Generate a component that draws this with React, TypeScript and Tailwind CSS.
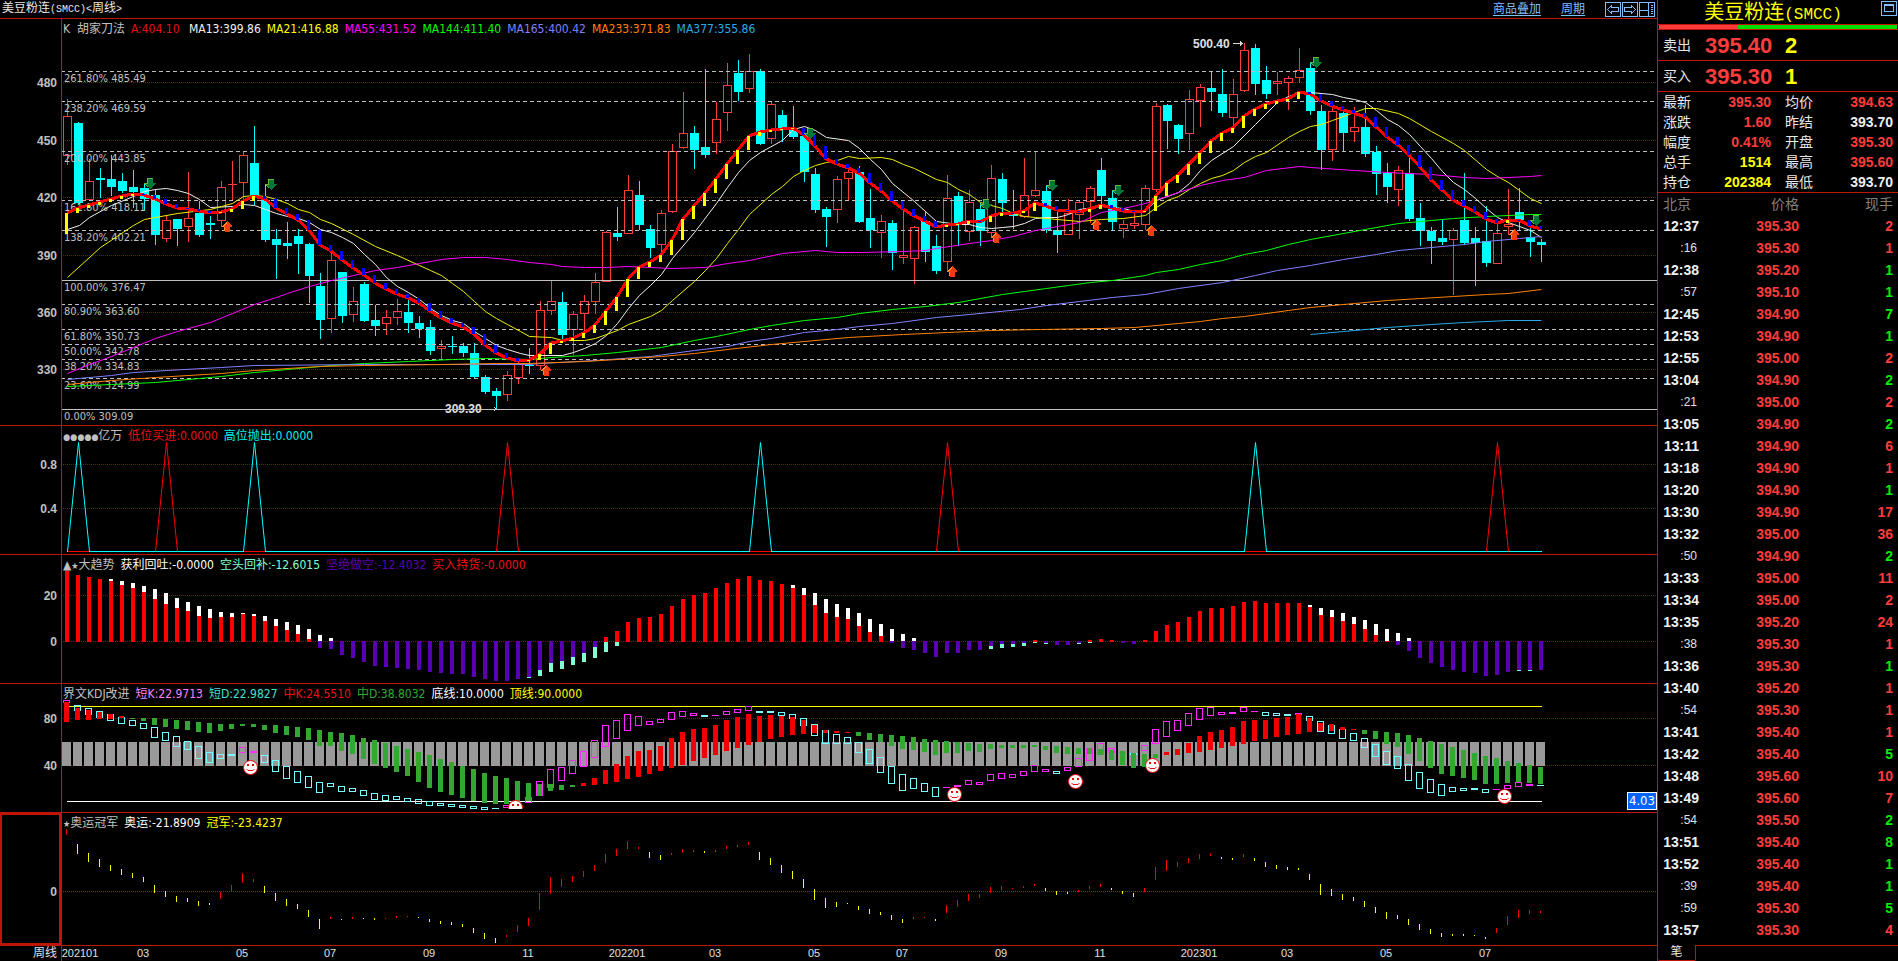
import type { ReactNode } from "react";

const LATIN = "font-['DejaVu_Sans_Condensed','Noto_Sans_CJK_SC',sans-serif]";
const STEP = 11;
const FIRST = 67;
const cx = (i: number) => FIRST + STEP * i;

type Row = [string, string];

/* high, body top, body bottom, low for each week; r = up, c = down */
const CANDLES = `r99,116,156,165 c122,123,203,204 r159,181,200,201 c168,178,180,197 c155,179,187,195 c173,181,191,192 c170,187,192,207
c184,188,199,209 c189,195,235,244 r215,220,239,242 c219,219,229,245 r172,218,227,242 c201,213,235,236 c216,223,225,238
r181,187,221,227 r161,184,185,200 r152,155,183,209 c126,163,195,204 c185,200,240,241 c229,239,245,278 c222,243,246,258
c229,236,244,273 c243,244,276,302 c273,286,320,338 r253,260,319,333 c272,272,316,322 r287,301,315,322 c282,284,321,321
c305,320,326,335 r310,317,324,335 r299,311,318,325 c299,312,323,332 c316,323,329,337 c320,327,351,354 r340,346,349,360
c336,346,347,353 c343,346,353,356 c343,353,377,377 c375,377,392,393 c388,391,396,409 r371,375,395,401 r360,364,378,384
c348,365,366,373 r301,310,366,370 r281,301,311,315 c292,302,335,339 r311,314,330,355 r295,301,314,333 r273,282,302,314
r231,232,282,282 c207,233,237,240 r175,190,234,234 c181,195,225,229 c225,229,248,257 r210,213,245,255 r144,151,212,213
r92,133,148,149 c126,133,150,168 c69,147,155,157 r102,119,143,154 r63,85,113,131 c60,73,92,100 r54,71,89,93
c69,71,144,144 r102,104,139,144 c110,115,128,141 c106,130,137,138 c134,136,172,181 c168,174,210,212 c207,209,217,246
r176,179,210,223 r169,172,179,201 c166,172,222,222 c189,218,230,247 r215,221,233,258 c220,223,253,269 r210,255,258,264
r226,227,259,284 c211,221,252,261 c235,246,271,273 r175,198,262,272 c192,196,225,245 r190,202,232,241 c203,209,231,245
r165,178,233,237 c173,179,203,212 c190,213,216,228 r158,195,217,218 r151,190,196,197 c186,191,230,232 c210,230,235,252
r199,213,235,235 r201,202,215,239 r186,188,202,223 c158,170,196,205 c191,198,222,230 r220,224,229,238 r212,223,226,229
r185,188,225,230 r103,106,190,192 c104,105,121,148 c124,125,139,153 r90,99,134,150 r84,87,101,127 c72,88,92,110
c69,94,113,116 r79,94,118,127 r43,50,91,92 c44,48,84,94 c66,80,94,98 r72,81,84,95 r76,78,83,110
r48,70,78,83 c63,68,111,114 c105,111,150,169 r107,111,150,161 c112,113,133,150 r107,127,132,142 c105,127,154,156
c146,152,174,194 c163,173,187,202 r166,170,190,206 c157,173,219,220 c203,218,231,245 c227,231,241,263 c219,238,242,244
r228,230,240,295 c173,220,243,244 c227,238,243,285 c206,241,263,266 r224,233,264,264 r189,224,227,235 c188,212,220,229
c223,237,242,256 c239,242,245,261`;

const TREND = [
  213, 208, 205, 202, 199, 196, 194, 195, 199, 204, 208, 209, 211, 213, 212, 209, 201, 196, 199, 208, 214, 220, 230, 245, 251,
  260, 268, 275, 283, 289, 294, 298, 303, 311, 318, 323, 327, 334, 345, 353, 358, 361, 360, 354, 343, 341, 338, 333, 325, 311,
  297, 279, 267, 262, 255, 240, 219, 206, 193, 179, 164, 150, 136, 132, 130, 129, 128, 135, 146, 159, 164, 168, 173, 183, 191,
  201, 209, 216, 221, 227, 225, 224, 221, 222, 216, 213, 213, 211, 203, 206, 210, 211, 212, 209, 205, 208, 211, 212, 211, 196,
  183, 175, 164, 153, 141, 133, 128, 116, 109, 104, 101, 99, 92, 94, 101, 106, 110, 113, 117, 127, 137, 145, 155, 167, 180,
  190, 200, 206, 212, 219, 223, 220, 220, 226, 229,
];

const AVERAGES: Row[] = [
  ["#f0f0f0", "67,229 79,225 89,217 111,205 133,196 144,191 155,189 166,188 177,190 188,193 199,199 210,207 232,206 243,204 254,205 265,209 276,213 287,216 298,218 309,222 320,229 331,232 342,237 353,243 364,254 375,264 386,277 397,286 408,292 419,299 430,308 441,315 452,320 463,323 474,331 485,338 496,345 507,349 520,353 529,355 562,355 573,352 584,348 595,343 606,335 617,323 628,308 639,295 650,285 661,274 672,258 694,232 716,203 727,187 738,172 749,160 760,152 782,140 793,129 804,126 815,130 826,137 848,140 859,148 870,159 881,169 892,183 914,201 925,211 936,221 958,224 969,224 980,227 991,228 1002,227 1013,226 1024,223 1035,218 1046,217 1057,217 1068,214 1079,209 1101,206 1112,207 1123,208 1134,211 1145,210 1156,200 1178,192 1189,183 1200,170 1211,160 1233,146 1255,124 1277,102 1288,96 1299,93 1310,92 1332,94 1343,97 1354,99 1365,102 1376,110 1387,119 1398,125 1409,134 1420,146 1431,158 1442,171 1453,182 1464,189 1475,198 1486,208 1497,217 1508,222 1519,226 1530,230 1541,237"],
  ["#f0f000", "67,277 100,247 133,225 144,219 155,217 177,213 210,209 221,206 232,203 243,196 254,195 265,196 276,199 287,203 298,209 309,212 320,219 331,223 353,234 375,246 397,255 419,265 430,270 441,275 452,283 463,291 474,301 485,311 496,318 507,324 520,331 529,336 551,337 562,340 584,340 595,338 606,334 617,330 628,324 650,316 661,310 672,300 694,281 705,270 716,258 727,243 738,229 749,214 771,194 782,186 793,176 804,170 815,165 826,162 837,160 848,156 859,158 881,157 892,159 903,164 914,168 936,179 947,182 958,189 969,194 980,202 991,205 1002,208 1013,213 1024,216 1035,217 1057,219 1079,221 1101,219 1123,218 1145,215 1156,207 1167,200 1178,196 1189,189 1200,183 1211,178 1222,175 1233,170 1244,162 1255,156 1266,152 1288,137 1299,131 1310,126 1321,124 1332,120 1354,112 1365,108 1376,108 1398,113 1409,118 1431,131 1453,143 1464,150 1486,169 1497,176 1508,182 1519,190 1530,198 1541,203"],
  ["#ff00ff", "67,373 89,364 111,356 133,347 155,338 177,331 210,322 232,313 254,304 276,297 287,293 309,286 331,280 353,275 375,270 397,267 419,263 441,259 463,257 485,257 507,259 529,262 551,264 562,266 584,267 606,267 628,266 650,267 672,268 705,267 727,263 749,260 782,253 815,250 837,252 859,252 903,251 925,250 936,248 969,243 991,240 1013,236 1035,230 1057,226 1079,222 1101,212 1123,208 1145,203 1178,192 1200,185 1222,180 1244,177 1266,170 1299,166 1310,167 1354,170 1387,172 1431,174 1464,177 1486,178 1530,176 1541,175"],
  ["#00ff00", "67,386 111,384 155,382 199,378 221,376 254,372 287,369 331,365 364,363 408,361 452,359 485,358 529,359 551,357 584,355 617,352 661,347 694,340 716,336 749,329 771,325 804,320 837,317 859,313 892,309 925,306 958,302 1002,294 1024,291 1046,288 1068,285 1090,282 1112,280 1145,275 1156,272 1178,269 1200,264 1222,260 1244,254 1266,250 1288,244 1310,239 1343,233 1365,229 1398,223 1431,220 1453,218 1486,216 1530,214 1541,214"],
  ["#8080ff", "67,379 111,375 133,372 166,370 221,367 254,365 364,364 529,364 540,363 595,360 650,356 694,350 727,346 749,341 771,338 804,332 837,329 859,326 892,323 936,317 969,314 1020,309 1046,305 1079,301 1112,297 1145,294 1178,288 1222,282 1255,275 1277,270 1310,265 1343,259 1376,254 1398,250 1431,247 1464,244 1486,241 1519,238 1541,236"],
  ["#ff8000", "67,384 111,380 155,377 221,373 254,370 320,366 364,365 441,364 496,363 529,363 584,361 617,359 661,356 694,353 727,349 771,344 804,341 848,337 903,334 947,332 991,330 1040,329 1101,328 1134,327 1178,323 1200,321 1222,318 1244,316 1288,310 1310,307 1354,303 1387,300 1420,298 1453,296 1486,294 1508,293 1541,289"],
  ["#28aae6", "1310,334 1343,331 1387,327 1431,324 1464,322 1508,320 1541,320"],
];

const FIB: [string, number, boolean][] = [
  ["261.80% 485.49", 71, true],
  ["238.20% 469.59", 101, true],
  ["200.00% 443.85", 151, true],
  ["161.80% 418.11", 200, true],
  ["138.20% 402.21", 230, true],
  ["100.00% 376.47", 280, false],
  ["80.90% 363.60", 304, true],
  ["61.80% 350.73", 329, true],
  ["50.00% 342.78", 344, true],
  ["38.20% 334.83", 359, true],
  ["23.60% 324.99", 378, true],
  ["0.00% 309.09", 409, false],
];

const SELL_MARKS = [[150, 178], [271, 179], [810, 128], [986, 199], [1052, 180], [1118, 185], [1316, 57], [1536, 215]];
const BUY_MARKS = [[227, 221], [546, 365], [952, 266], [996, 232], [1096, 219], [1151, 225], [1514, 229]];

/* top of the main bar, then the end of the lighter part where there is one */
const MOMENTUM = `571 575 577 579 581,579 585,581 588,583 592,586 599,589 604,593 608,598 611,602 616,606 618,609 617,612 617,613 614,613
616,614 621,616 626,619 630,622 634,625 639,629 648,635 649,638 655 658 662 666 667 668 669 670 672 673 674 674 677 679 681 681 679
677,678 670,676 663,672 661,669 657,665 653,662 647,658 637,652 631,646 622 618 617 614 606 599 595 593 588 583 579 576 580 581 584
588,585 595,588 605,593 613,599 617,604 619,608 626,613 632,619 636,624 643,629 648,634 650,638 653 657 653 653 650 650 646,649
644,648 644,647 643,646 640,643 643,644 645 645 643,644 640,643 639 640 643 644 640 631 625 622 617 611 608 608 606 602 601 603 603
603 603 607,605 615,608 617,610 621,613 624,617 629,620 635,624 641,629 645,633 651,638 658 663 667 670 672 673 676 675 672 670,671
670,671 670`;

const SHORT_KD = `m700-703 c705-711 c708-715 c711-718 c714-721 c717-724 c720-726 c723-729 c727-738 c732-741 c736-747 c741-750 c746-759
c752-763 c754-759 c754-756 m747-753 m751-753 c755-763 c760-772 c766-779 c771-783 c776-788 c782-793 c783-787 c786-792 c788-792
c790-796 c793-800 c795-801 c796-800 c798-802 c799-804 c801-806 c803-806 c804-807 c805-808 c806-809 c807-810 c808-809 m805-808
m803-807 m797-803 m781-796 m769-788 m767-781 m760-774 m751-767 m740-758 m725-747 m720-739 m714-731 m716-726 m721-725 m719-723
m712-720 m711-717 m713-716 c715-717 m715-716 m711-715 m709-713 m706-711 c711-713 c711-713 c712-716 c714-719 c718-726 c724-736
c730-744 c734-744 c737-744 c742-753 c749-764 c757-773 c766-784 c774-791 c778-789 c783-792 c787-797 m787-788 m785-787 m780-785
m782-785 m774-781 m773-779 m774-778 m771-776 m765-772 m769-772 c771-774 m767-771 m758-767 m748-761 m743-755 m748-753 m752-753
c753-755 m745-751 m729-744 m721-737 m720-731 m713-726 m708-720 m707-716 m712-715 m712-714 m707-712 m711-712 c712-716 c713-716
c714-716 m713-715 c716-721 c721-732 c725-734 c729-739 c733-741 c738-748 c744-757 c751-765 c756-769 c764-781 c772-789 c779-793
c784-796 c787-792 c788-791 c788-790 c789-793 m789-790 m785-789 m782-787 m784-786 c785-786`;

const MID_KD = `r702-722 r708-720 r710-720 r712-719 r714-719 r716-718 g718-719 g718-721 g718-725 g719-727 g720-729 g721-730 g722-732
g723-733 g724-731 g724-729 g724-726 g724-727 g725-730 g725-733 g726-735 g727-737 g728-740 g730-746 g732-746 g733-751 g735-754
g738-759 g740-764 g743-768 g746-772 g749-776 g752-782 g755-788 g759-792 g762-795 g766-798 g769-801 g773-803 g776-804 g778-804
g781-801 g783-801 g784-796 g784-791 g785-790 g785-787 r783-786 r778-785 r770-784 r764-782 r756-779 r751-777 r750-774 r746-771
r738-768 r732-765 r729-761 r728-758 r725-755 r720-751 r717-748 r714-745 r716-742 r715-739 r716-737 r717-735 r720-734 r725-733
r730-733 r731-733 r732-733 g732-736 g733-740 g734-742 g735-746 g736-749 g737-750 g739-752 g740-755 g741-753 g742-753 g743-751
g744-752 g744-749 g745-748 g745-748 g745-748 g745-747 g746-750 g746-753 g747-754 g748-754 g748-754 g749-755 g750-760 g751-765
g753-768 g754-767 g754-758 r752-755 r749-755 r743-753 r736-752 r732-750 r730-748 r727-746 r721-744 r720-741 r720-739 r718-737
r717-735 r714-734 r718-732 r723-731 r724-731 r727-730 r729-730 g730-734 g731-739 g732-744 g733-747 g735-754 g738-761 g741-768
g744-774 g747-776 g750-778 g753-780 g756-784 g758-784 g761-783 g763-782 g765-783 g767-784`;

const CHAMPION = `r829-835 y844-854 y853-862 y859-867 y865-871 y869-875 y873-878 y877-882 y885-893 y891-897 y896-902 y898-902 y901-906
y903-905 r892-899 r885-891 r873-883 r879-882 y886-893 y893-901 y899-906 y904-909 y910-917 y919-929 r917-919 y919-920 r917-919
y918-919 y918-920 r918-919 r916-918 r916-917 y917-918 y919-922 y921-924 y922-925 y924-927 y928-933 y933-939 y938-943 r935-937
r925-932 r918-926 r893-910 r877-894 r879-887 r876-882 r871-877 r865-871 r854-863 r849-856 r841-849 r847-849 y852-858 y855-860
r853-855 r849-853 r850-852 y851-853 r850-852 r846-849 r845-847 r842-845 y852-860 y858-865 y865-873 y871-879 y879-888 y889-900
y898-908 y902-907 y903-904 y906-910 y909-914 y912-915 y915-920 y919-923 r917-919 r917-918 y919-921 r905-913 r900-907 r894-901
r894-898 r887-893 r886-890 r888-889 r886-888 r884-886 y888-891 y891-895 y892-894 r890-892 r886-889 r884-887 y888-890 y891-894
y893-897 r888-892 r867-880 r860-871 r862-867 r858-863 r854-859 r853-856 y857-859 y858-860 r854-857 y858-861 y862-867 y865-869
y867-870 y868-870 y874-880 y884-895 y889-896 y894-900 y897-901 y901-907 y907-913 y912-919 y915-919 y919-925 y924-930 y929-934
y933-937 y934-936 y934-936 y935-936 y937-939 r928-933 r916-925 r910-918 r910-914 r911-913`;

const SMILEYS = [[250, 767], [515, 807], [954, 794], [1075, 781], [1152, 765], [1504, 796]];

const spans = (src: string) =>
  src.split(/\s+/).map((s) => {
    const [a, b] = s.slice(1).split("-").map(Number);
    return { kind: s[0], a, b };
  });

const MONTHS: [string, number][] = [
  ["202101", 80], ["03", 143], ["05", 242], ["07", 330], ["09", 429], ["11", 528], ["202201", 627], ["03", 715],
  ["05", 814], ["07", 902], ["09", 1001], ["11", 1100], ["202301", 1199], ["03", 1287], ["05", 1386], ["07", 1485],
];

function Panel({ top, height, labels, axis, bright, children, overlay }: {
  top: number;
  height: string;
  labels: [string, ReactNode][];
  axis: [string, number][];
  bright?: boolean;
  children: ReactNode;
  overlay?: ReactNode;
}) {
  return (
    <section className="relative grid border-t border-[#c01408]">
      <svg className={`[grid-area:1/1] w-full ${height}`} shapeRendering="crispEdges">
        <g transform={`translate(0 ${-top})`}>
          {axis.map(([t, y]) => (
            <g key={t}>
              <line x1="63" x2="100%" y1={y + 0.5} y2={y + 0.5} stroke={bright ? "#c01408" : "#8c0a0a"} strokeDasharray="1 1" />
              <text x="57" y={y + 5} textAnchor="end" className="fill-[#c0c0c0] font-['Liberation_Sans',sans-serif] text-xs font-bold">{t}</text>
            </g>
          ))}
          {children}
          <rect x="61" y={top} width="1" height="500" fill="#c01408" />
        </g>
      </svg>
      <h2 className={`[grid-area:1/1] z-10 flex h-5 items-center gap-1.5 self-start whitespace-nowrap pl-[63px] text-xs ${LATIN}`}>
        {labels.map(([color, text]) => (
          <span key={color} style={{ color }}>{text}</span>
        ))}
      </h2>
      {overlay}
    </section>
  );
}

function PricePanel() {
  const candles = CANDLES.split(/\s+/);
  return (
    <Panel
      top={19}
      height="h-[406px]"
      axis={[["480", 82], ["450", 140], ["420", 197], ["390", 255], ["360", 312], ["330", 369]]}
      labels={[
        ["#c0c0c0", "K\u00a0\u00a0胡家刀法"], ["#e61010", "A:404.10\u00a0"], ["#f0f0f0", "MA13:399.86"], ["#ffff00", "MA21:416.88"],
        ["#ff00ff", "MA55:431.52"], ["#00ff00", "MA144:411.40"], ["#8080ff", "MA165:400.42"], ["#ff8000", "MA233:371.83"],
        ["#28aae6", "MA377:355.86"],
      ]}
    >
      {candles.map((s, i) => {
        const [h, t, b, l] = s.slice(1).split(",").map(Number);
        const x = cx(i);
        return s[0] === "c" ? (
          <g key={i} fill="#00ffff">
            <rect x={x} y={h} width="1" height={l - h + 1} />
            <rect x={x - 4} y={t} width="9" height={Math.max(1, b - t)} />
          </g>
        ) : (
          <g key={i} fill="#ff3c3c">
            <rect x={x} y={h} width="1" height={Math.max(0, t - h)} />
            <rect x={x} y={b} width="1" height={Math.max(0, l - b)} />
            {b - t < 2 ? (
              <rect x={x - 4} y={t} width="9" height="1" />
            ) : (
              <rect x={x - 3.5} y={t + 0.5} width="8" height={b - t - 1} fill="none" stroke="#ff3c3c" />
            )}
          </g>
        );
      })}
      {FIB.map(([t, y, dashed]) => (
        <g key={t}>
          <line x1="61" x2="100%" y1={y + 0.5} y2={y + 0.5} stroke="#c0c0c0" strokeDasharray={dashed ? "4 3" : undefined} />
          <text x="64" y={y + 11} className={`fill-[#c0c0c0] text-[11px] ${LATIN}`}>{t}</text>
        </g>
      ))}
      <g shapeRendering="auto" fill="none">
        {AVERAGES.map(([color, pts]) => (
          <polyline key={color} points={pts} stroke={color} strokeWidth="1" transform="translate(0.5 0.5)" />
        ))}
      </g>
      <polyline points={TREND.map((y, i) => `${cx(i)},${y}`).join(" ")} fill="none" stroke="#ff0000" strokeWidth="3" />
      {TREND.map((y, i) => {
        const prev = i ? TREND[i - 1] : 234;
        return <rect key={i} x={cx(i) - 2} y={Math.min(y, prev)} width="3" height={Math.max(1, Math.abs(y - prev))} fill={y < prev ? "#ffff00" : "#0000ff"} />;
      })}
      {SELL_MARKS.map(([x, y]) => (
        <g key={x} transform={`translate(${x} ${y})`}>
          <path d="M-3 0h6v5h3l-6 6-6-6h3z" fill="#007838" />
          <path d="M-3 0h6v1h-5v5h-2l2 3-5-4h4z" fill="#6cb43c" />
        </g>
      ))}
      {BUY_MARKS.map(([x, y]) => (
        <g key={x} transform={`translate(${x} ${y})`}>
          <path d="M0 0l5 5v1h-2v5h-5v-5h-3V5z" fill="#f03c10" />
          <path d="M0 0v2l-3 3v1h1v4h-1V6h-2V5z" fill="#ff9020" />
        </g>
      ))}
      <g className="fill-[#e0e0e0] font-['Liberation_Sans',sans-serif] text-xs font-bold">
        <text x="1193" y="48">500.40</text>
        <text x="445" y="413">309.30</text>
      </g>
      <path d="M1233 43.5h10M1240 41v5M1241 42v3M494 407v1M495 408v1M494 410v1" stroke="#d8d8d8" fill="none" />
      <rect x="440" y="409" width="60" height="1" fill="#c0c0c0" />
    </Panel>
  );
}

function SignalPanel() {
  const peaks: [number, string][] = [[9, "#ff0000"], [40, "#ff0000"], [80, "#ff0000"], [130, "#ff0000"], [1, "#00ffff"], [17, "#00ffff"], [63, "#00ffff"], [108, "#00ffff"]];
  return (
    <Panel
      top={426}
      height="h-32"
      axis={[["0.8", 464], ["0.4", 508]]}
      labels={[
        ["#c0c0c0", <><span className="text-[9px]">●●●●●</span>亿万</>],
        ["#f01010", "低位买进:0.0000"],
        ["#00f0f0", "高位抛出:0.0000"],
      ]}
    >
      <rect x="67" y="551" width="1475" height="1" fill="#00ffff" />
      <g shapeRendering="auto">
        {peaks.map(([i, color]) => (
          <polyline key={i} points={`${cx(i) - 11},551 ${cx(i)},442 ${cx(i) + 11},551`} transform="translate(0.5 0.5)" fill="none" stroke={color} />
        ))}
      </g>
      {[1, 17, 63, 108].map((i) => (
        <rect key={i} x={cx(i) - 10} y="551" width="21" height="1" fill="#ff0000" />
      ))}
    </Panel>
  );
}

function MomentumPanel() {
  const zero = 641;
  return (
    <Panel
      top={555}
      height="h-32"
      axis={[["20", 595], ["0", zero]]}
      labels={[
        ["#c0c0c0", <>▲<span className="text-[9px]">★</span>大趋势</>], ["#ffffff", "获利回吐:-0.0000"], ["#7fffd4", "空头回补:-12.6015"],
        ["#5a00b4", "坚绝做空:-12.4032"], ["#f01010", "买入持货:-0.0000"],
      ]}
    >
      {MOMENTUM.split(/\s+/).map((s, i) => {
        const [y, e] = s.split(",").map(Number);
        const up = y <= zero;
        const x = cx(i) - 2;
        const light = e === undefined ? null : e < zero
          ? { y: e, h: (up ? y : zero) - e, fill: "#ffffff" }
          : { y: up ? zero + 1 : y, h: e - (up ? zero + 1 : y), fill: "#7fffd4" };
        return (
          <g key={i}>
            <rect x={x} y={up ? y : zero} width="4" height={up ? zero + 1 - y : y - zero} fill={up ? "#ff0000" : "#5a00b4"} />
            {light && <rect x={x} y={light.y} width="4" height={light.h} fill={light.fill} />}
          </g>
        );
      })}
    </Panel>
  );
}

function KdjPanel() {
  return (
    <Panel
      top={684}
      height="h-32"
      axis={[["80", 718], ["40", 765]]}
      labels={[
        ["#c0c0c0", "界文KDJ改进"], ["#ff80ff", "短K:22.9713"], ["#40e0d0", "短D:22.9827"], ["#f01010", "中K:24.5510"],
        ["#32a832", "中D:38.8032"], ["#ffffff", "底线:10.0000"], ["#ffff00", "顶线:90.0000"],
      ]}
      overlay={
        <output className={`absolute bottom-0.5 right-0 z-10 border border-white bg-[#0064ff] px-px text-[13px] leading-4 text-white ${LATIN}`}>4.03</output>
      }
    >
      {TREND.map((_, i) => (
        <rect key={i} x={cx(i) - 5} y="742" width="9" height="24" fill="#999999" />
      ))}
      <rect x="67" y="706" width="1475" height="1" fill="#ffff00" />
      <rect x="67" y="801" width="1475" height="1" fill="#ffffff" />
      {spans(SHORT_KD).map(({ kind, a, b }, i) => {
        const color = kind === "m" ? "#ff28ff" : "#78ffff";
        return b - a < 3 ? (
          <rect key={i} x={cx(i) - 4} y={a} width="7" height={b - a} fill={color} />
        ) : (
          <rect key={i} x={cx(i) - 3.5} y={a + 0.5} width="6" height={b - a - 1} fill="none" stroke={color} />
        );
      })}
      {spans(MID_KD).map(({ kind, a, b }, i) => (
        <rect key={i} x={cx(i) - 3} y={a} width="5" height={b - a} fill={kind === "r" ? "#f00000" : "#32a832"} />
      ))}
      <clipPath id="kdj"><rect x="0" y="684" width="2000" height="125" /></clipPath>
      <g clipPath="url(#kdj)" shapeRendering="auto">
        {SMILEYS.map(([x, y]) => (
          <g key={x} transform={`translate(${x + 0.5} ${y + 0.5})`}>
            <circle r="7" fill="#ffffff" stroke="#f00000" />
            <path d="M-3.5-3.5h2v2h-2zM1.5-3.5h2v2h-2z" fill="#f00000" />
            <path d="M-4 1.5l1.5 1.5h5l1.5-1.5" fill="none" stroke="#f00000" />
          </g>
        ))}
      </g>
    </Panel>
  );
}

function ChampionPanel() {
  return (
    <Panel
      top={813}
      height="h-[132px]"
      bright
      axis={[["0", 891]]}
      labels={[["#c0c0c0", <><span className="text-[9px]">★</span>奥运冠军</>], ["#ffffff", "奥运:-21.8909"], ["#ffff00", "冠军:-23.4237"]]}
    >
      {spans(CHAMPION).map(({ kind, a, b }, i) => (
        <rect key={i} x={cx(i) - 1} y={a} width="1" height={b - a} fill={kind === "r" ? "#ff0000" : "#ffff00"} />
      ))}
      <rect x="1" y="814" width="59" height="130" fill="none" stroke="#c01408" strokeWidth="2" />
    </Panel>
  );
}

const QUOTES: [string, string, string, string, string, string][] = [
  ["最新", "395.30", "text-[#ff3c3c]", "均价", "394.63", "text-[#ff3c3c]"],
  ["涨跌", "1.60", "text-[#ff3c3c]", "昨结", "393.70", "text-[#eeeeee]"],
  ["幅度", "0.41%", "text-[#ff3c3c]", "开盘", "395.30", "text-[#ff3c3c]"],
  ["总手", "1514", "text-[#ffff00]", "最高", "395.60", "text-[#ff3c3c]"],
  ["持仓", "202384", "text-[#ffff00]", "最低", "393.70", "text-[#eeeeee]"],
];

/* time, price, lots; a leading + marks an upward tick, - a downward one */
const TICKS = `12:37 395.30 +2|:16 395.30 +1|12:38 395.20 -1|:57 395.10 -1|12:45 394.90 -7|12:53 394.90 -1|12:55 395.00 +2|13:04 394.90 -2|:21 395.00 +2|13:05 394.90 -2|13:11 394.90 +6|13:18 394.90 +1|13:20 394.90 -1|13:30 394.90 +17|13:32 395.00 +36|:50 394.90 -2|13:33 395.00 +11|13:34 395.00 +2|13:35 395.20 +24|:38 395.30 +1|13:36 395.30 -1|13:40 395.20 +1|:54 395.30 +1|13:41 395.40 +1|13:42 395.40 -5|13:48 395.60 +10|13:49 395.60 +7|:54 395.50 -2|13:51 395.40 -8|13:52 395.40 -1|:39 395.40 -1|:59 395.30 -5|13:57 395.30 +4`
  .split("|")
  .map((r) => r.split(" "));

function Depth({ label, price, lots }: { label: string; price: string; lots: string }) {
  return (
    <div className="flex h-[31px] items-center border-b border-[#c01408] pl-[5px] text-[22px] font-bold">
      <span className="w-[42px] text-sm font-normal text-[#e8e8e8]">{label}</span>
      <span className="w-[80px] text-[#ff3c3c]">{price}</span>
      <span className="text-[#ffff00]">{lots}</span>
    </div>
  );
}

function Sidebar() {
  return (
    <aside className="flex w-[241px] shrink-0 flex-col border-l border-[#c01408] font-['Liberation_Sans','Noto_Sans_CJK_SC',sans-serif]">
      <header className="grid h-6 grid-cols-[1fr_auto_1fr] items-center">
        <h1 className="col-start-2 whitespace-nowrap pr-2.5 text-xl leading-6 text-[#ffff00]">
          美豆粉连<span className="font-['Liberation_Mono',monospace] text-base">(SMCC)</span>
        </h1>
        <button aria-label="最大化" className="self-start justify-self-end pr-px pt-px">
          <svg width="16" height="15" fill="none" stroke="#80bcff" shapeRendering="crispEdges">
            <rect x="0.5" y="0.5" width="15" height="14" />
            <rect x="3.5" y="3.5" width="9" height="7" />
            <path d="M3 4.5h10" />
          </svg>
        </button>
      </header>
      <div className="flex h-1.5 border-y border-[#c01408] px-px">
        <span className="w-1/3 bg-[#ff3c3c]" />
        <span className="grow bg-[#00e000]" />
      </div>
      <Depth label="卖出" price="395.40" lots="2" />
      <Depth label="买入" price="395.30" lots="1" />
      <dl className="flex h-[101px] flex-col border-b border-[#c01408] text-sm leading-5">
        {QUOTES.map(([a, av, ac, b, bv, bc]) => (
          <div key={a} className="grid grid-cols-[28px_80px_42px_1fr] px-[5px] text-[#e8e8e8]">
            <dt>{a}</dt>
            <dd className={`text-right font-bold ${ac}`}>{av}</dd>
            <dt className="pl-[14px]">{b}</dt>
            <dd className={`text-right font-bold ${bc}`}>{bv}</dd>
          </div>
        ))}
      </dl>
      <table className="w-full table-fixed text-right text-sm font-bold">
        <thead>
          <tr className="h-[22px] text-[#808080]">
            <th className="w-[41px] p-0 pl-[5px] text-left font-normal">北京</th>
            <th className="w-[100px] p-0 font-normal">价格</th>
            <th className="p-0 pr-[5px] font-normal">现手</th>
          </tr>
        </thead>
        <tbody>
          {TICKS.map(([time, price, lots]) => (
            <tr key={time + price + lots} className="h-[22px] leading-5">
              <td className={time[0] === ":" ? "p-0 pr-0.5 text-xs font-normal text-[#e0e0e0]" : "p-0 text-[#f0f0f0]"}>{time}</td>
              <td className="p-0 text-[#ff3c3c]">{price}</td>
              <td className={`p-0 pr-[5px] ${lots[0] === "+" ? "text-[#ff3c3c]" : "text-[#00ee00]"}`}>{lots.slice(1)}</td>
            </tr>
          ))}
        </tbody>
      </table>
      <footer className="mt-auto flex h-4">
        <button className="w-[38px] rounded-b-xs border-b border-r border-[#c01408] text-xs leading-[15px] text-[#e8e8e8]">笔</button>
        <span className="grow border-t border-[#c01408]" />
      </footer>
    </aside>
  );
}

function Toolbar() {
  const icons: Row[] = [
    ["上一页", "M2.5 7.5l4-4v2h7v4h-7v2z"],
    ["下一页", "M13.5 7.5l-4-4v2h-7v4h7v2z"],
    ["分栏", "M9.5 1v13M1 8.5h9M12 3.5h2M12 5.5h2M12 7.5h2M12 9.5h2M12 11.5h2"],
  ];
  return (
    <header className="flex h-[18px] items-center justify-between font-['Liberation_Sans','Noto_Sans_CJK_SC',sans-serif] text-xs leading-4">
      <h1 className="pl-0.5 text-[#e8e8e8]">
        美豆粉连<span className="font-['Liberation_Mono',monospace] text-[10px]">(SMCC)&lt;</span>周线
        <span className="font-['Liberation_Mono',monospace] text-[10px]">&gt;</span>
      </h1>
      <nav className="flex items-center gap-5 pr-0.5 text-[#80bcff]">
        <a href="#overlay" className="underline underline-offset-2">商品叠加</a>
        <a href="#period" className="underline underline-offset-2">周期</a>
        <span className="flex gap-px">
          {icons.map(([name, d]) => (
            <button key={name} aria-label={name}>
              <svg width="16" height="15" className="block" fill="none" stroke="currentColor" shapeRendering="crispEdges">
                <rect x="0.5" y="0.5" width="15" height="14" />
                <path d={d} />
              </svg>
            </button>
          ))}
        </span>
      </nav>
    </header>
  );
}

export default function App() {
  return (
    <div className="flex min-h-screen w-full bg-black">
      <main className="flex min-w-0 grow flex-col overflow-hidden">
        <Toolbar />
        <PricePanel />
        <SignalPanel />
        <MomentumPanel />
        <KdjPanel />
        <ChampionPanel />
        <div className="border-t border-[#c01408]">
          <svg className="h-[15px] w-full font-['Liberation_Sans','Noto_Sans_CJK_SC',sans-serif] text-[11px]" fill="#e0e0e0">
            <text x="57" y="11" textAnchor="end" className="text-xs">周线</text>
            {MONTHS.map(([t, x]) => (
              <text key={x} x={x} y="11" textAnchor="middle">{t}</text>
            ))}
            <rect x="61" width="1" height="15" fill="#c01408" />
          </svg>
        </div>
      </main>
      <Sidebar />
    </div>
  );
}
